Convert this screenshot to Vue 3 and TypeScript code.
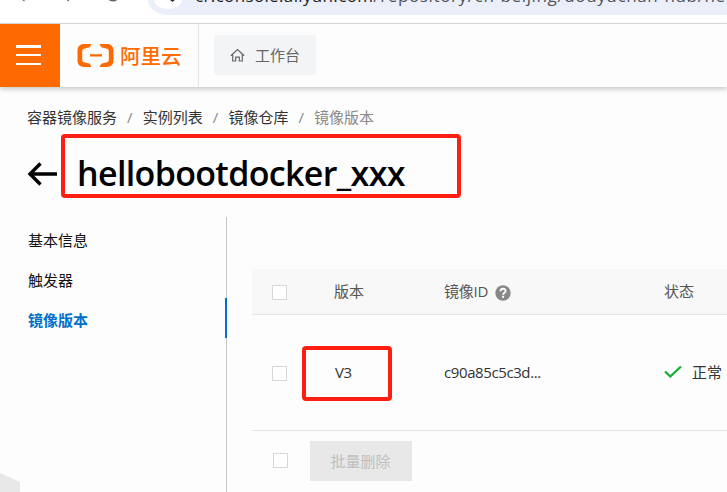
<script setup lang="ts">
import { ref } from 'vue'

interface NavItem { label: string; active: boolean }
interface ImageVersion { tag: string; imageId: string; status: string }

const crumbs: string[] = ['容器镜像服务', '实例列表', '镜像仓库', '镜像版本']
const nav = ref<NavItem[]>([
  { label: '基本信息', active: false },
  { label: '触发器', active: false },
  { label: '镜像版本', active: true },
])
const rows = ref<ImageVersion[]>([{ tag: 'V3', imageId: 'c90a85c5c3d...', status: '正常' }])
</script>

<template>
  <div class="page">
    <div class="browser">
      <svg class="browser-icons" width="150" height="4" viewBox="0 0 150 4">
        <path d="M23 0l2 1M68 0l2 1" stroke="#777" stroke-width="1.200" />
        <path d="M111 0q4 1.500 7 0" fill="none" stroke="#666" stroke-width="1.400" />
      </svg>
      <div class="address">
        <div class="site"><svg width="28" height="9" viewBox="0 0 28 9"><path d="M0 0h28a14 9 0 0 1-28 0z" fill="#fff" /><path d="M16 0h5l-2.500 2z" fill="#333" /></svg></div>
        <div class="url"><span class="host">cr.console.aliyun.com</span><span class="path">/repository/cn-beijing/douyuchan-hub/he</span></div>
      </div>
    </div>

    <header class="topbar">
      <button class="menu" aria-label="菜单"><i></i><i></i><i></i></button>
      <div class="brand">
        <svg width="38" height="24" viewBox="0 0 38 24" fill="#ff6a00">
          <path d="M14.500 0H7C3.200 0 .5 2.600.5 6.200v10.600C.5 20.400 3.200 23 7 23h7.500l-1.700-3.300-5.700-1.500c-1.200-.3-1.900-1-1.900-2.200V7c0-1.200.7-1.900 1.900-2.200l5.700-1.500zM22.500 0H30c3.800 0 6.500 2.600 6.500 6.200v10.600c0 3.600-2.700 6.200-6.500 6.200h-7.500l1.700-3.300 5.700-1.500c1.200-.3 1.900-1 1.900-2.200V7c0-1.200-.7-1.900-1.900-2.200l-5.700-1.500zM13 10.200h12v2.200H13z" />
        </svg>
        <span class="brand-name">阿里云</span>
      </div>
      <button class="workbench">
        <svg width="15" height="14" viewBox="0 0 15 14" fill="none" stroke="#666" stroke-width="1.200">
          <path d="M.8 7.700L7.500 1.500l6.700 6.200M2.700 6.500V13h3V9.200h3.600V13h3V6.500" />
        </svg>
        <span>工作台</span>
      </button>
    </header>

    <nav class="crumbs">
      <template v-for="(crumb, i) in crumbs" :key="crumb">
        <span v-if="i" class="slash">/</span>
        <span :class="{ current: i === crumbs.length - 1 }">{{ crumb }}</span>
      </template>
    </nav>

    <div class="heading">
      <svg width="31" height="26" viewBox="0 0 31 26" fill="none" stroke="#000" stroke-width="3.400">
        <path d="M30 13H3M13.500 2.500L3 13l10.500 10.500" />
      </svg>
      <h1>hellobootdocker_xxx</h1>
    </div>

    <div class="content">
      <aside>
        <a v-for="item in nav" :key="item.label" :class="{ active: item.active }">{{ item.label }}</a>
      </aside>
      <main>
        <div class="row head">
          <span class="check"></span>
          <span class="tag">版本</span>
          <span class="id">镜像ID
            <svg width="16" height="16" viewBox="0 0 16 16"><circle cx="8" cy="8" r="7.700" fill="#888" /><path d="M5.500 6.200c.1-3.200 5.100-3.100 5.100-.3 0 1.900-2.500 1.800-2.500 3.800" fill="none" stroke="#fff" stroke-width="1.900" /><rect x="7.100" y="10.800" width="2" height="2" fill="#fff" /></svg>
          </span>
          <span>状态</span>
        </div>
        <div v-for="row in rows" :key="row.tag" class="row body">
          <span class="check"></span>
          <span class="tag">{{ row.tag }}</span>
          <span class="id">{{ row.imageId }}</span>
          <span class="status">
            <svg width="18" height="14" viewBox="0 0 18 14"><path d="M1 6.500l5.300 5L17 1.500" fill="none" stroke="#16ae32" stroke-width="2.300" /></svg>
            {{ row.status }}
          </span>
        </div>
        <div class="actions">
          <span class="check"></span>
          <button disabled>批量删除</button>
        </div>
      </main>
    </div>

    <div class="mark mark-title"></div>
    <div class="mark mark-tag"></div>
    <svg class="corner" width="20" height="19" viewBox="0 0 20 19"><path d="M0 0l20 9v10H0z" fill="#e8e8e8" /></svg>
  </div>
</template>

<style>
body { margin: 0; }
</style>

<style scoped>
.page {
  position: relative;
  width: 727px;
  height: 492px;
  overflow: hidden;
  background: #fdfdfd;
  color: #333;
  font: 15px/20px "Open Sans", "Noto Sans CJK SC", sans-serif;
}
.page * { box-sizing: border-box; }
button { border: 0; padding: 0; font: inherit; }
svg { display: block; flex: none; }
.browser {
  display: flex;
  height: 24px;
  background: #fff;
  border-bottom: 1px solid #dedede;
}
.browser-icons { width: 148px; }
.address {
  display: flex;
  flex: 1;
  height: 15px;
  padding-left: 6px;
  overflow: hidden;
  background: #ebeff9;
  border-bottom-left-radius: 20px 15px;
}
.url {
  margin: -16px 0 0 13px;
  white-space: nowrap;
  font-size: 17px;
  line-height: 24px;
}
.host { color: #222; letter-spacing: .35px; }
.path { color: #50545a; letter-spacing: .63px; }
.topbar {
  display: flex;
  position: relative;
  height: 63px;
  background: #fdfdfd;
  box-shadow: 0 2px 5px rgba(0, 0, 0, .22);
}
.menu {
  display: flex;
  flex-direction: column;
  align-items: center;
  gap: 7px;
  width: 60px;
  padding: 21px 3px 0 0;
  background: #ff6a00;
}
.menu i { width: 25px; height: 2px; background: #fff; }
.menu i:first-child { height: 3px; margin-bottom: -1px; }
.brand {
  display: flex;
  align-items: center;
  width: 139px;
  padding-left: 17px;
  border-right: 1px solid #e5e5e5;
}
.brand-name {
  margin-left: 5px;
  color: #ff6a00;
  font-size: 20.500px;
  font-weight: 500;
  line-height: 24px;
}
.workbench {
  display: flex;
  align-items: center;
  width: 102px;
  height: 40px;
  margin: 11px 0 0 15px;
  padding: 0 0 1px 16px;
  gap: 10px;
  border-radius: 3px;
  background: #f3f4f6;
  color: #666;
}
.crumbs {
  display: flex;
  height: 20px;
  margin: 20px 0 0 27px;
}
.crumbs .slash { width: 25.700px; text-align: center; color: #888; }
.crumbs .current { color: #888; }
.heading {
  display: flex;
  align-items: center;
  height: 47px;
  margin: 23px 0 0 27px;
}
h1 {
  margin: 0 0 0 19px;
  color: #000;
  font: 600 34px/47px "Open Sans", sans-serif;
  letter-spacing: -.65px;
}
.content { display: flex; height: 275px; margin-top: 20px; }
aside {
  display: flex;
  flex-direction: column;
  width: 227px;
  padding-top: 1px;
  border-right: 1px solid #c5c5c5;
}
aside a {
  height: 40px;
  margin-right: -1px;
  padding: 12px 0 0 28px;
  color: #111;
}
aside a.active {
  border-right: 2px solid #0070cc;
  color: #0070cc;
  font-weight: 700;
}
main { flex: 1; margin: 52px 0 0 25px; }
.row {
  display: grid;
  grid-template-columns: 82px 110px 220px 1fr;
  align-items: center;
  border-bottom: 1px solid #e5e5e5;
}
.row > span:not(.check) { margin-top: -2px; }
.head { height: 46px; background: #f8f8f8; color: #555; }
.body { height: 116px; }
.check { width: 15px; height: 15px; margin-left: 20px; border: 1px solid #d8d8d8; background: #fff; }
.row .check { margin-top: 1px; }
.id, .status { display: flex; align-items: center; gap: 6px; white-space: nowrap; }
.head .id { gap: 7px; letter-spacing: -.2px; }
.head .id svg { margin-top: 4px; }
.body .id { letter-spacing: -.4px; }
.body .tag { padding-left: 1px; letter-spacing: -.4px; }
.status { gap: 10px; }
.actions {
  display: flex;
  align-items: center;
  gap: 22px;
  height: 60px;
  padding-left: 1px;
}
.actions .check { margin-top: -1px; }
.actions button { width: 102px; height: 40px; padding: 0 1px 1px 0; background: #e8e8e8; color: #bfbfbf; }
.mark { position: absolute; border: 4px solid #ff1e12; border-radius: 4px; }
.mark-title { left: 61px; top: 134px; width: 400px; height: 64px; }
.mark-tag { left: 302px; top: 346px; width: 90px; height: 55px; }
.corner { position: absolute; left: 0; bottom: 0; }
</style>
